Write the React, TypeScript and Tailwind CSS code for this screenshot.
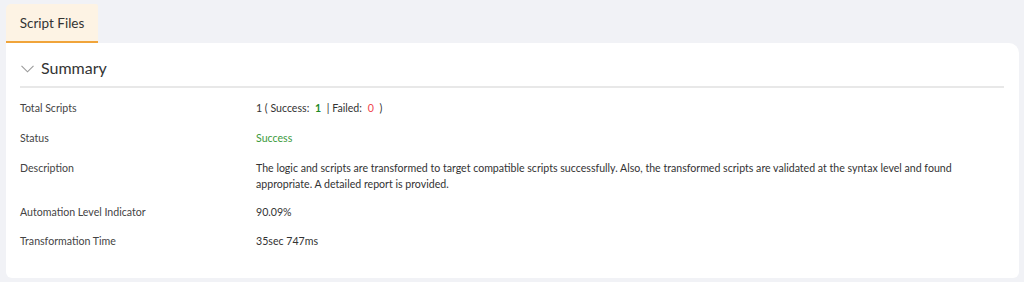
import React from "react";

const rows: { label: string; value: React.ReactNode; mb: string }[] = [
  {
    label: "Total Scripts",
    mb: "mb-[14px]",
    value: (
      <span>
        1 ( Success: <span className="font-bold text-[#1e8a2a] mx-[3px]">1</span> | Failed:{" "}
        <span className="text-[#f0444c] mx-[3px]">0</span> )
      </span>
    ),
  },
  { label: "Status", mb: "mb-[14px]", value: <span className="text-[#3c9a3c]">Success</span> },
  {
    label: "Description",
    mb: "mb-[12px]",
    value:
      "The logic and scripts are transformed to target compatible scripts successfully. Also, the transformed scripts are validated at the syntax level and found appropriate. A detailed report is provided.",
  },
  { label: "Automation Level Indicator", mb: "mb-[13px]", value: "90.09%" },
  { label: "Transformation Time", mb: "mb-[14px]", value: "35sec 747ms" },
];

export default function App() {
  return (
    <div
      className="w-[1024px] h-[282px] bg-[#f1f2f6] pt-[4px] px-[6px] text-[#333]"
      style={{ fontFamily: "Lato, 'Noto Sans', sans-serif" }}
    >
      <div className="flex">
        <div className="w-[92px] h-[39px] bg-[#fdf3e4] rounded-tl-[5px] rounded-tr-[2px] border-b-2 border-[#f0a43a] flex items-center justify-center pt-[1px] text-[13.5px] text-[#333]">
          Script Files
        </div>
      </div>
      <div className="w-[1013px] h-[235px] bg-white rounded-tr-[10px] rounded-b-[6px] px-[14px]">
        <div className="flex items-center h-[45px] pt-[6px] border-b-2 border-[#e8e8e8] mr-[1px]">
          <svg width="13" height="8" viewBox="0 0 13 8" className="mr-[7px] ml-[1px] mt-[2px]">
            <path d="M0.5 0.8 L6.5 6.8 L12.5 0.8" fill="none" stroke="#9a9a9a" strokeWidth="1.1" />
          </svg>
          <span className="text-[16px] text-[#333]">Summary</span>
        </div>
        <div className="pt-[12px] text-[10.6px] leading-[16px]">
          {rows.map((r) => (
            <div key={r.label} className={`flex ${r.mb}`}>
              <div className="w-[236px] shrink-0 text-[#444]">{r.label}</div>
              <div className="w-[710px] text-[#333]">{r.value}</div>
            </div>
          ))}
        </div>
      </div>
    </div>
  );
}
